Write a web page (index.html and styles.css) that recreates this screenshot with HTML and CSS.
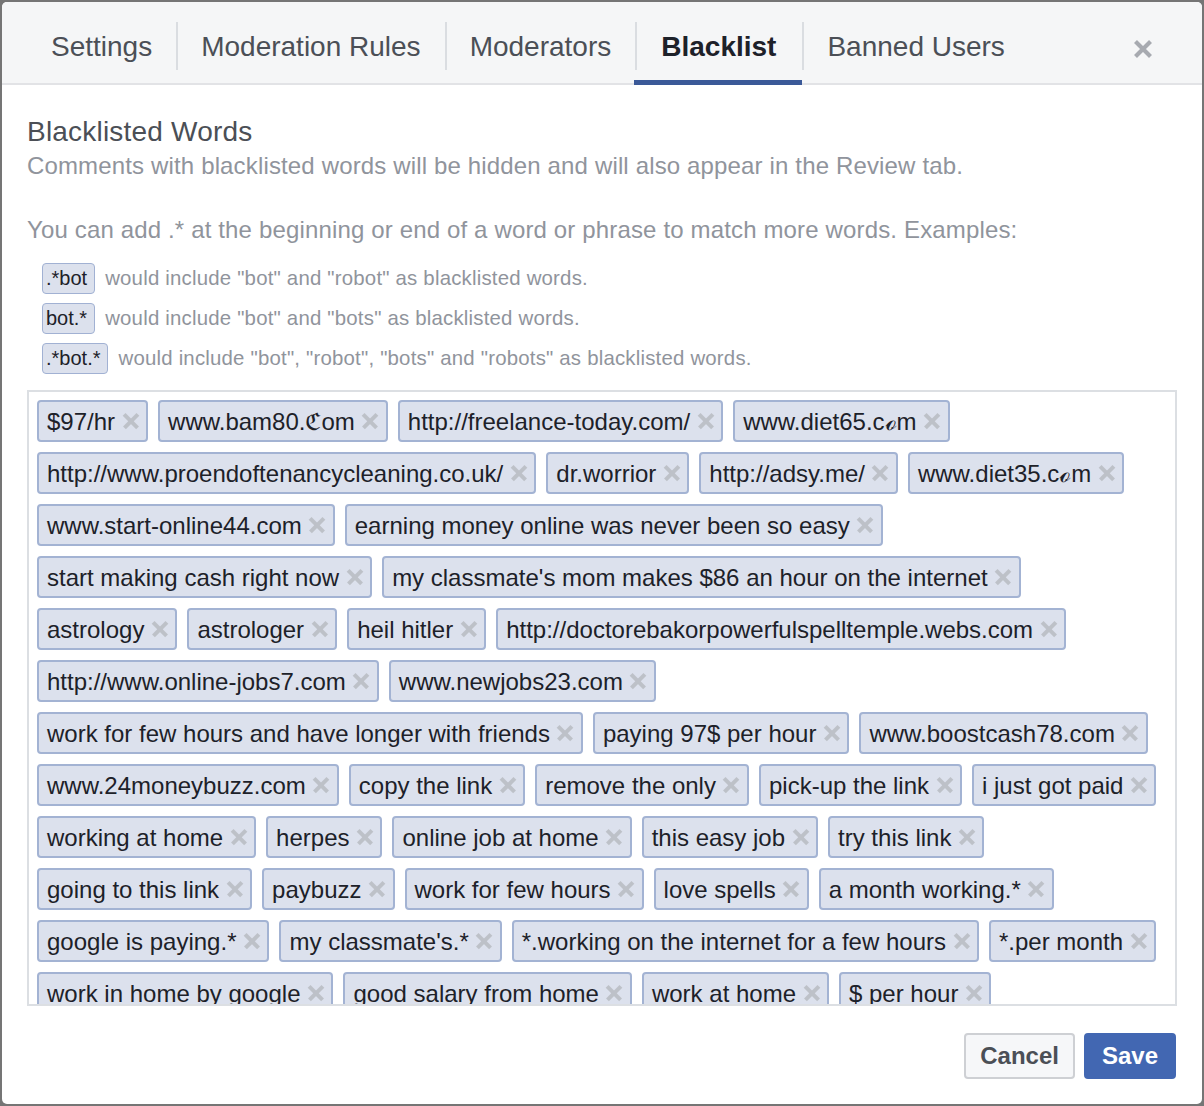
FILE: index.html
```html
<!DOCTYPE html>
<html lang="en">
<head>
<meta charset="utf-8">
<title>Blacklist</title>
<link rel="stylesheet" href="styles.css">
</head>
<body>
<div class="dialog">
  <div class="tabs">
    <div class="tab">Settings</div>
    <div class="tab">Moderation Rules</div>
    <div class="tab">Moderators</div>
    <div class="tab active">Blacklist</div>
    <div class="tab">Banned Users</div>
    <button class="close" aria-label="Close">
      <svg width="20" height="20" viewBox="0 0 20 20"><path d="M2.5 2.5L17.5 17.5M17.5 2.5L2.5 17.5"/></svg>
    </button>
  </div>
  <div class="body">
    <h2 class="title">Blacklisted Words</h2>
    <p class="desc">Comments with blacklisted words will be hidden and will also appear in the Review tab.</p>
    <p class="desc hint">You can add .* at the beginning or end of a word or phrase to match more words. Examples:</p>
    <ul class="examples">
      <li class="example"><span class="tag">.*bot</span><span class="note">would include "bot" and "robot" as blacklisted words.</span></li>
      <li class="example"><span class="tag">bot.*</span><span class="note">would include "bot" and "bots" as blacklisted words.</span></li>
      <li class="example"><span class="tag">.*bot.*</span><span class="note">would include "bot", "robot", "bots" and "robots" as blacklisted words.</span></li>
    </ul>
    <div class="tokenbox">
      <ul class="tokens">
        <li class="token">$97/hr<i class="x"></i></li>
        <li class="token">www.bam80.ℭom<i class="x"></i></li>
        <li class="token">http://freelance-today.com/<i class="x"></i></li>
        <li class="token">www.diet65.cℴm<i class="x"></i></li>
        <li class="token">http://www.proendoftenancycleaning.co.uk/<i class="x"></i></li>
        <li class="token">dr.worrior<i class="x"></i></li>
        <li class="token">http://adsy.me/<i class="x"></i></li>
        <li class="token">www.diet35.cℴm<i class="x"></i></li>
        <li class="token">www.start-online44.com<i class="x"></i></li>
        <li class="token">earning money online was never been so easy<i class="x"></i></li>
        <li class="token">start making cash right now<i class="x"></i></li>
        <li class="token">my classmate's mom makes $86 an hour on the internet<i class="x"></i></li>
        <li class="token">astrology<i class="x"></i></li>
        <li class="token">astrologer<i class="x"></i></li>
        <li class="token">heil hitler<i class="x"></i></li>
        <li class="token">http://doctorebakorpowerfulspelltemple.webs.com<i class="x"></i></li>
        <li class="token">http://www.online-jobs7.com<i class="x"></i></li>
        <li class="token">www.newjobs23.com<i class="x"></i></li>
        <li class="token">work for few hours and have longer with friends<i class="x"></i></li>
        <li class="token">paying 97$ per hour<i class="x"></i></li>
        <li class="token">www.boostcash78.com<i class="x"></i></li>
        <li class="token">www.24moneybuzz.com<i class="x"></i></li>
        <li class="token">copy the link<i class="x"></i></li>
        <li class="token">remove the only<i class="x"></i></li>
        <li class="token">pick-up the link<i class="x"></i></li>
        <li class="token">i just got paid<i class="x"></i></li>
        <li class="token">working at home<i class="x"></i></li>
        <li class="token">herpes<i class="x"></i></li>
        <li class="token">online job at home<i class="x"></i></li>
        <li class="token">this easy job<i class="x"></i></li>
        <li class="token">try this link<i class="x"></i></li>
        <li class="token">going to this link<i class="x"></i></li>
        <li class="token">paybuzz<i class="x"></i></li>
        <li class="token">work for few hours<i class="x"></i></li>
        <li class="token">love spells<i class="x"></i></li>
        <li class="token">a month working.*<i class="x"></i></li>
        <li class="token">google is paying.*<i class="x"></i></li>
        <li class="token">my classmate's.*<i class="x"></i></li>
        <li class="token">*.working on the internet for a few hours<i class="x"></i></li>
        <li class="token">*.per month<i class="x"></i></li>
        <li class="token">work in home by google<i class="x"></i></li>
        <li class="token">good salary from home<i class="x"></i></li>
        <li class="token">work at home<i class="x"></i></li>
        <li class="token">$ per hour<i class="x"></i></li>
      </ul>
    </div>
  </div>
  <div class="footer">
    <button class="btn">Cancel</button>
    <button class="btn primary">Save</button>
  </div>
</div>
</body>
</html>
```

FILE: styles.css
```css
* { box-sizing: border-box; }

html, body {
  margin: 0;
  padding: 0;
}

body {
  background: #757575;
  font-family: "Liberation Sans", Arial, Helvetica, sans-serif;
  color: #1d2129;
  width: 1204px;
  height: 1106px;
  overflow: hidden;
}

.dialog {
  margin: 2px;
  width: 1200px;
  height: 1102px;
  background: #fff;
  border-radius: 5px;
  overflow: hidden;
  display: flex;
  flex-direction: column;
}

/* ---------- tabs ---------- */
.tabs {
  flex: none;
  height: 83px;
  background: #f5f6f7;
  border-bottom: 2px solid #e2e3e6;
  display: flex;
  padding-left: 24px;
}

.tab {
  position: relative;
  display: flex;
  align-items: center;
  padding: 9px 24px 0 25px;
  font-size: 28px;
  line-height: 34px;
  color: #4b4f56;
  white-space: nowrap;
}

.tab + .tab { padding-left: 25px; }

.tab + .tab::before {
  content: "";
  position: absolute;
  left: 0;
  top: 20px;
  width: 2px;
  height: 48px;
  background: #dadde1;
}

.tab.active {
  padding-left: 26px;
  padding-right: 26px;
  font-weight: bold;
  color: #1d2129;
}

.tab.active::after {
  content: "";
  position: absolute;
  left: -1px;
  right: 0;
  bottom: -2px;
  height: 5px;
  background: #3b5998;
}

.close {
  margin: 37px 49px 0 auto;
  align-self: flex-start;
  width: 20px;
  height: 20px;
  padding: 0;
  border: 0;
  background: none;
}

.close svg {
  display: block;
  stroke: #a7aab0;
  stroke-width: 4.2;
  fill: none;
}

/* ---------- body ---------- */
.body {
  flex: none;
  padding: 30px 25px 0;
}

.title {
  margin: 0;
  font-size: 28px;
  line-height: 34px;
  font-weight: normal;
  color: #4b4f56;
  letter-spacing: 0.2px;
}

.desc {
  margin: 2px 0 0;
  font-size: 24px;
  line-height: 30px;
  color: #90949c;
  letter-spacing: 0.15px;
}

.desc.hint { margin-top: 34px; }

.examples {
  list-style: none;
  margin: 18px 0 0;
  padding: 0 0 0 15px;
  display: flex;
  flex-direction: column;
  gap: 9px;
}

.example {
  display: flex;
  align-items: center;
  height: 31px;
}

.tag {
  display: inline-block;
  height: 31px;
  padding: 3px 7px 3px 3px;
  border: 1px solid #a1b1d3;
  border-radius: 4px;
  background: #dce1ed;
  font-size: 20px;
  line-height: 23px;
  color: #1d2129;
}

.note {
  margin-left: 10px;
  font-size: 20.4px;
  line-height: 23px;
  color: #90949c;
  letter-spacing: 0.2px;
}

/* ---------- tokens ---------- */
.tokenbox {
  margin-top: 16px;
  height: 616px;
  border: 2px solid #dcdfe3;
  overflow: hidden;
}

.tokens {
  list-style: none;
  margin: 0;
  padding: 8px;
  display: flex;
  flex-wrap: wrap;
  gap: 10px;
}

.token {
  display: flex;
  align-items: center;
  height: 42px;
  padding: 1px 8px 0;
  border: 2px solid #a3b3d3;
  border-radius: 4px;
  background: #dce1ed;
  font-size: 24px;
  line-height: 28px;
  color: #1d2129;
  white-space: nowrap;
}

.x {
  position: relative;
  display: inline-block;
  width: 15px;
  height: 15px;
  margin-left: 8px;
  margin-top: -1px;
}

.x::before,
.x::after {
  content: "";
  position: absolute;
  left: 50%;
  top: 50%;
  width: 19px;
  height: 3.5px;
  background: #bdc1c8;
  transform: translate(-50%, -50%) rotate(45deg);
}

.x::after {
  transform: translate(-50%, -50%) rotate(-45deg);
}

/* ---------- footer ---------- */
.footer {
  flex: none;
  display: flex;
  justify-content: flex-end;
  gap: 9px;
  padding: 27px 26px 0;
}

.btn {
  height: 46px;
  padding: 0 14px;
  border: 2px solid #ced0d4;
  border-radius: 4px;
  background: #f6f7f9;
  font-family: "Liberation Sans", Arial, Helvetica, sans-serif;
  font-size: 24px;
  font-weight: bold;
  color: #4b4f56;
}

.btn.primary {
  padding: 0 16px;
  background: #4267b2;
  border-color: #4267b2;
  color: #fff;
}
```
